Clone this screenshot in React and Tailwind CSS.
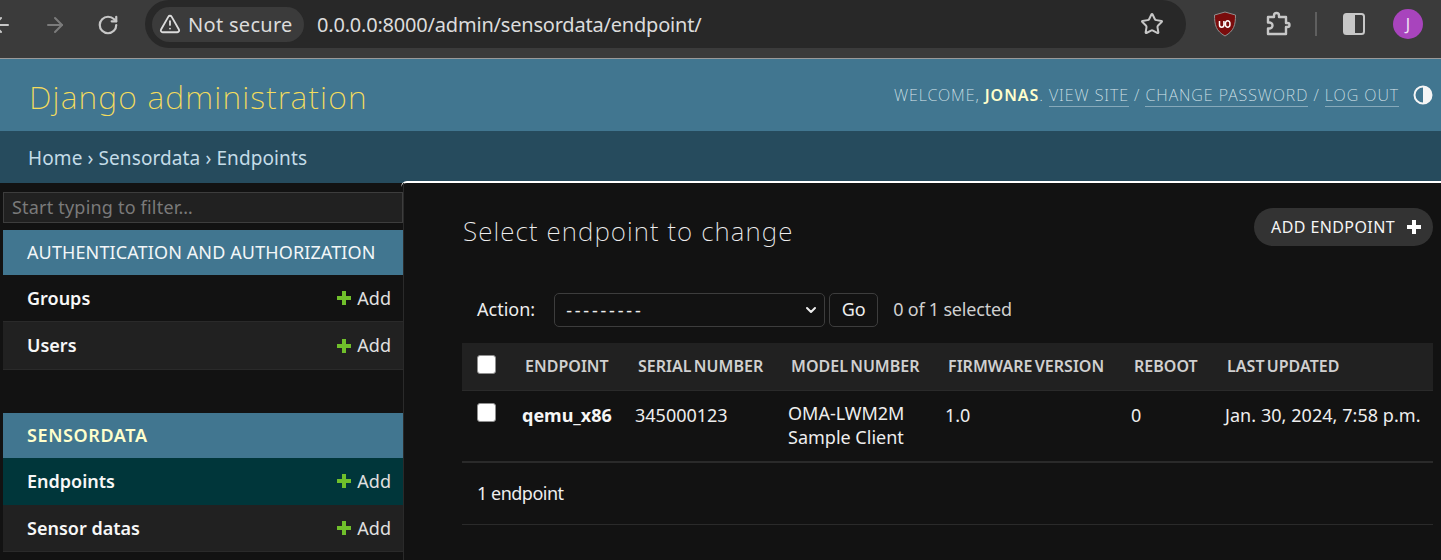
import React from 'react';
import { ArrowLeft, ArrowRight, RotateCw, Star, TriangleAlert, ChevronDown } from 'lucide-react';

const Cross = ({ color }) => (
    <svg width="16" height="16" viewBox="0 0 16 16" className="shrink-0">
        <path d="M6 1h4v5h5v4h-5v5H6v-5H1V6h5z" fill={color} />
    </svg>
);

const SidebarRow = ({ name, dark, current, last }) => (
    <div
        className={`flex items-center justify-between pl-6 pr-3 h-[47px] border-b ${current ? 'bg-[#00363a] border-[#00363a]' : dark ? 'bg-[#121212] border-[#2a2a2a]' : 'bg-[#212121] border-[#2a2a2a]'} ${last ? 'h-[48px]' : ''}`}
    >
        <span className="font-semibold text-[#f7f7f7]">{name}</span>
        <span className="flex items-center gap-[5px] text-[#e0e0e0]">
            <Cross color="#70bf2b" />
            Add
        </span>
    </div>
);

const Checkbox = () => <span className="block w-[19px] h-[19px] rounded-[3px] bg-white border border-[#8f8f8f]" />;

const headers = [
    ['ENDPOINT', 'w-[113px]'],
    ['SERIAL NUMBER', 'w-[153px]'],
    ['MODEL NUMBER', 'w-[157px]'],
    ['FIRMWARE VERSION', 'w-[186px]'],
    ['REBOOT', 'w-[93px]'],
    ['LAST UPDATED', 'w-[221px]'],
];

const Toolbar = () => (
    <div className="flex items-start h-[59px] bg-[#3b3b3b] border-b border-[#9a9a9a] overflow-hidden">
        <div className="flex items-center h-[50px] w-[145px] shrink-0 text-[#c7c7c7]">
            <ArrowLeft size={24} strokeWidth={2} className="-ml-[11px] shrink-0" />
            <ArrowRight size={24} strokeWidth={2} className="ml-[30px] shrink-0 text-[#7b7b7b]" />
            <RotateCw size={22} strokeWidth={2.4} className="ml-[30px] shrink-0" />
        </div>
        <div className="flex items-center w-[1041px] h-[48px] rounded-full bg-[#282828] pl-[7px] pr-[22px] shrink-0">
            <div className="flex items-center gap-[7px] h-[35px] w-[152px] pl-[7px] rounded-full bg-[#3b3b3b] text-[#dcdcdc] text-[20px] tracking-[0.3px]">
                <TriangleAlert size={22} strokeWidth={2} className="shrink-0" />
                <span className="pt-[1px]">Not secure</span>
            </div>
            <span className="ml-[13px] pt-[1px] text-[#dcdcdc] text-[20px] tracking-[-0.2px]">0.0.0.0:8000/admin/sensordata/endpoint/</span>
            <Star size={24} strokeWidth={2} className="ml-auto text-[#c7c7c7] shrink-0" />
        </div>
        <div className="flex items-center h-[48px] text-[#c7c7c7]">
            <svg width="24" height="26" viewBox="0 0 24 26" className="ml-[27px] shrink-0">
                <path d="M12 1l10.500 3c0 10-1.500 16-10.500 21C3 20 1.500 14 1.500 4z" fill="#7a0c0c" stroke="#8f8f8f" strokeWidth="1" />
                <path d="M6.500 10v4a2.200 2.200 0 0 0 4.400 0v-4M12.500 14v-2a2.200 2.200 0 1 1 4.400 0v2a2.200 2.200 0 1 1-4.400 0z" fill="none" stroke="#fff" strokeWidth="1.5" />
            </svg>
            <svg width="26" height="26" viewBox="0 0 26 26" className="ml-[28px] shrink-0">
                <path
                    d="M3 6h6V4.500a2.500 2.500 0 0 1 5 0V6h7v6h1.500a2 2 0 0 1 0 4H21v7H3v-5.500h1.500a3 3 0 0 0 0-6H3z"
                    fill="none"
                    stroke="currentColor"
                    strokeWidth="2.4"
                    strokeLinejoin="round"
                />
            </svg>
            <span className="ml-[24px] w-[2px] h-[24px] bg-[#5f5f5f] shrink-0" />
            <svg width="22" height="22" viewBox="0 0 22 22" className="ml-[26px] shrink-0">
                <rect x="1" y="1" width="20" height="20" rx="2.5" fill="none" stroke="currentColor" strokeWidth="2" />
                <path d="M1 3.500A2.500 2.500 0 0 1 3.500 1H12v20H3.500A2.500 2.500 0 0 1 1 18.500z" fill="currentColor" />
            </svg>
            <span className="ml-[28px] flex items-center justify-center w-[30px] h-[30px] rounded-full bg-[#a844bd] text-[#f0e0f5] text-[16px] shrink-0">
                J
            </span>
        </div>
    </div>
);

const Header = () => (
    <div className="flex items-center justify-between h-[72px] bg-[#417690] pl-[29px] pr-[8px]">
        <h1 className="pt-[3px] text-[32px] font-extralight text-[#f5dd5d] tracking-[1.15px]">Django administration</h1>
        <div className="flex items-center text-[16px] font-extralight text-[#d9e6ec] tracking-[0.95px]">
            <span>
                WELCOME, <b className="font-semibold text-[#ffffcc]">JONAS</b>.{' '}
                <span className="border-b border-[#86a9ba]">VIEW SITE</span> /{' '}
                <span className="border-b border-[#86a9ba]">CHANGE PASSWORD</span> /{' '}
                <span className="border-b border-[#86a9ba]">LOG OUT</span>
            </span>
            <svg width="20" height="20" viewBox="0 0 20 20" className="ml-[14px] shrink-0">
                <circle cx="10" cy="10" r="8.500" fill="none" stroke="#f5f5f5" strokeWidth="2" />
                <path d="M10 1.500a8.500 8.500 0 0 1 0 17z" fill="#f5f5f5" />
            </svg>
        </div>
    </div>
);

const App = () => {
    return (
        <div className="w-[1441px] h-[560px] overflow-hidden bg-[#121212] text-[18px] text-[#eeeeee] font-['Noto_Sans',sans-serif]">
            <Toolbar />
            <Header />
            <div className="flex items-center h-[52px] bg-[#264b5d] pl-[28px] pt-[2px] text-[#c4dce8] text-[19px] tracking-[0.1px]">
                Home › Sensordata › Endpoints
            </div>

            <div className="flex h-[377px]">
                <aside className="relative z-10 w-[404px] shrink-0 pl-[3px] border-r border-[#2a2a2a] pt-[9px]">
                    <div className="h-[31px] flex items-center pl-[8px] bg-[#212121] border border-[#3d3d3d] text-[#7a7a7a] tracking-[0.2px]">
                        Start typing to filter…
                    </div>
                    <div className="mt-[7px] h-[45px] flex items-center pl-6 bg-[#417690] text-[#f2f6f8] tracking-[0.12px]">
                        AUTHENTICATION AND AUTHORIZATION
                    </div>
                    <SidebarRow name="Groups" dark />
                    <SidebarRow name="Users" last />
                    <div className="mt-[43px] h-[45px] flex items-center pl-6 bg-[#417690] text-[#ffffcc] font-semibold tracking-[0.6px]">
                        SENSORDATA
                    </div>
                    <SidebarRow name="Endpoints" current />
                    <SidebarRow name="Sensor datas" />
                </aside>

                <main className="flex-1 -mt-[2px] -ml-[3px] h-[379px] border-t-2 border-white rounded-tl-md bg-[#121212] pl-[61px] pr-[8px]">
                    <div className="flex justify-between items-start pt-[25px]">
                        <h2 className="ml-px text-[26px] font-extralight text-[#eeeeee] tracking-[1.1px] leading-[46px]">Select endpoint to change</h2>
                        <button className="flex items-center gap-[11px] h-[38px] pl-[17px] pr-[11px] rounded-full bg-[#333333] text-[#f5f5f5] text-[16px] tracking-[0.4px]">
                            ADD ENDPOINT
                            <Cross color="#ffffff" />
                        </button>
                    </div>

                    <div className="flex items-center mt-[39px] h-[34px] pl-[15px]">
                        <span className="pb-[2px]">Action:</span>
                        <div className="ml-[19px] flex items-center justify-between w-[271px] h-[34px] pl-[11px] pr-[5px] rounded-[5px] border border-[#3d3d3d] bg-[#121212]">
                            <span className="pt-[1px] tracking-[2.8px]">---------</span>
                            <ChevronDown size={16} strokeWidth={3} />
                        </div>
                        <div className="ml-[4px] pb-[2px] flex items-center justify-center w-[49px] h-[34px] rounded-[5px] border border-[#3d3d3d]">Go</div>
                        <span className="ml-[15px] pb-[2px] text-[#d0d0d0] tracking-[-0.2px]">0 of 1 selected</span>
                    </div>

                    <table className="mt-[16px] w-[971px] table-fixed border-collapse text-left">
                        <thead>
                            <tr className="h-[47px] bg-[#212121] border-b border-[#2a2a2a]">
                                <th className="w-[48px] pl-[15px] align-top pt-[12px]">
                                    <Checkbox />
                                </th>
                                {headers.map(([label, w]) => (
                                    <th key={label} className={`${w} pl-[15px] text-[16px] font-semibold text-[#d0d0d0] whitespace-nowrap [word-spacing:-2px] tracking-[0.03px]`}>
                                        {label}
                                    </th>
                                ))}
                            </tr>
                        </thead>
                        <tbody>
                            <tr className="h-[72px] border-b-2 border-[#2a2a2a] align-top">
                                <td className="pl-[15px] pt-[12px]">
                                    <Checkbox />
                                </td>
                                <td className="pl-[12px] pt-[11px] font-bold text-[#f5f5f5]">qemu_x86</td>
                                <td className="pl-[12px] pt-[11px]">345000123</td>
                                <td className="pl-[12px] pt-[11px] leading-[23px]">
                                    OMA-LWM2M
                                    <br />
                                    <span className="relative top-px">Sample Client</span>
                                </td>
                                <td className="pl-[12px] pt-[11px]">1.0</td>
                                <td className="pl-[12px] pt-[11px]">0</td>
                                <td className="pl-[13px] pt-[11px] whitespace-nowrap tracking-[0.05px]">Jan. 30, 2024, 7:58 p.m.</td>
                            </tr>
                        </tbody>
                    </table>

                    <div className="flex items-center h-[62px] pl-[15px] border-b border-[#2a2a2a] tracking-[-0.5px]">1 endpoint</div>
                </main>
            </div>
        </div>
    );
};

export default App;
